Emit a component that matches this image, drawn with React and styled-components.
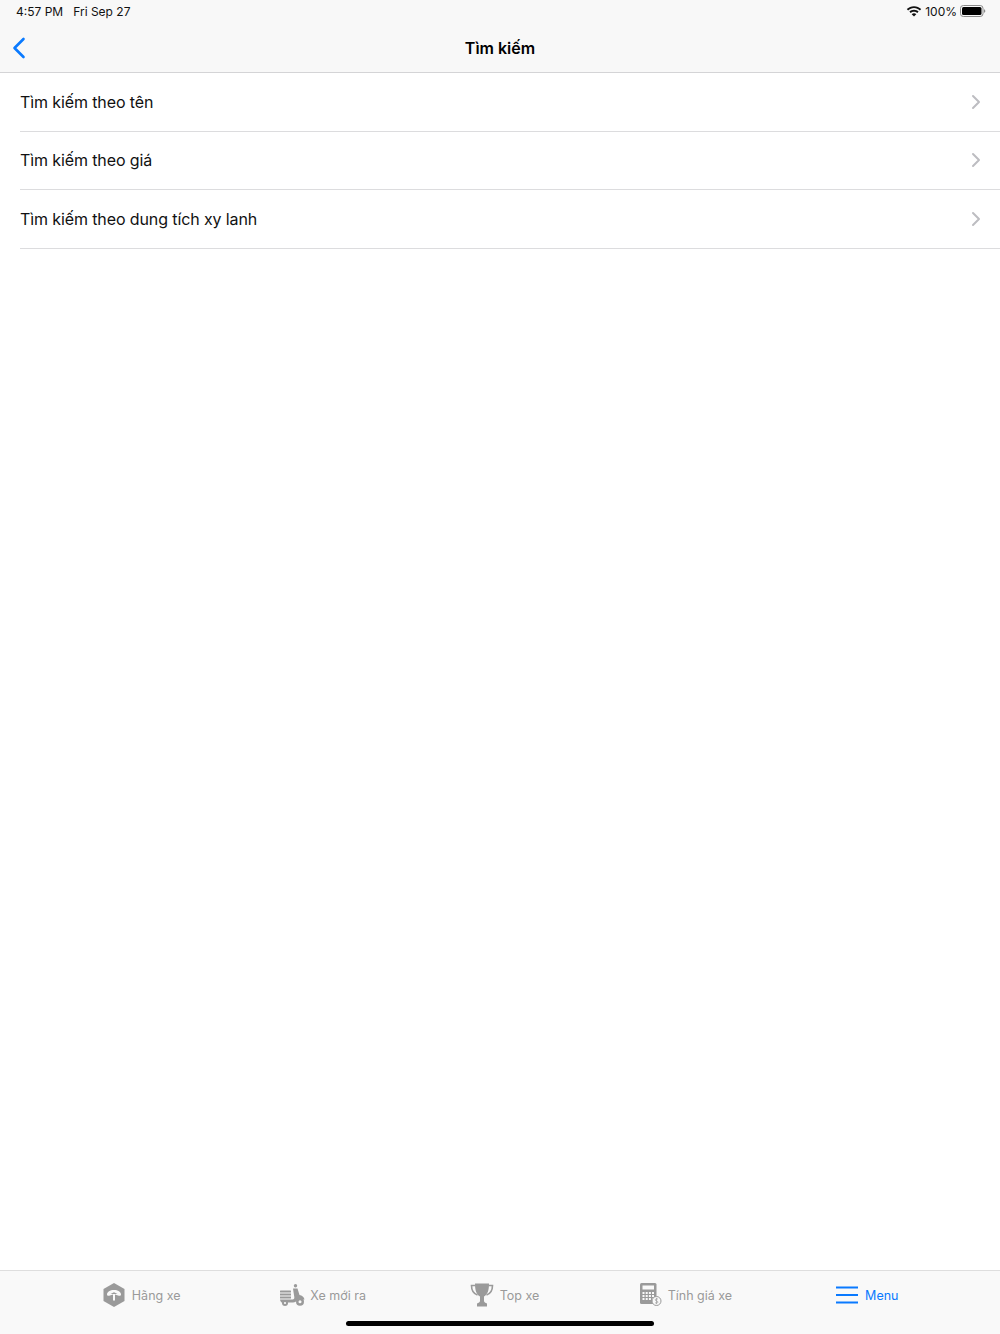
import React from 'react';
import styled, { createGlobalStyle } from 'styled-components';
import { ChevronRight } from 'lucide-react';

const GlobalStyle = createGlobalStyle`
  html, body {
    margin: 0;
    padding: 0;
    background: #fff;
    font-family: Inter, "Liberation Sans", sans-serif;
  }
`;

const Page = styled.div`
  position: relative;
  width: 1000px;
  height: 1334px;
  display: flex;
  flex-direction: column;
  overflow: hidden;
`;

const Header = styled.header`
  height: 72px;
  background: #f8f8f8;
  border-bottom: 1px solid #d4d4d6;
  display: flex;
  flex-direction: column;
`;

const StatusBar = styled.div`
  height: 22px;
  padding: 0 14px 2px 16px;
  display: flex;
  align-items: center;
  justify-content: space-between;
  font-size: 12px;
  color: #111;
`;

const StatusLeft = styled.div`
  display: flex;
  gap: 10px;
`;

const StatusRight = styled.div`
  display: flex;
  align-items: center;
  gap: 3px;
`;

const NavBar = styled.div`
  flex: 1;
  display: flex;
  align-items: center;
  justify-content: center;
  position: relative;
`;

const BackButton = styled.div`
  position: absolute;
  left: 12px;
  top: 13px;
  display: flex;
`;

const Title = styled.h1`
  margin: 0;
  font-size: 16px;
  font-weight: 600;
  color: #000;
`;

const List = styled.div`
  flex: 1;
  padding-left: 20px;
`;

const Row = styled.div`
  height: 57.5px;
  padding-right: 12px;
  display: flex;
  align-items: center;
  justify-content: space-between;
  border-bottom: 1px solid #dcdcde;
  font-size: 16px;
  letter-spacing: -0.11px;
  color: #111;
  svg {
    color: #bdbdc1;
  }
`;

const TabBar = styled.nav`
  height: 63px;
  background: #f9f9f9;
  border-top: 1px solid #dedede;
  padding: 0 42px 0 51px;
  display: grid;
  grid-template-columns: repeat(5, 1fr);
`;

const Tab = styled.div`
  height: 48px;
  display: flex;
  align-items: center;
  justify-content: center;
  gap: ${(props) => props.$gap}px;
  font-size: 12.5px;
  color: ${(props) => (props.$active ? '#0a7aff' : '#9a9a9a')};
`;

const HomeIndicator = styled.div`
  position: absolute;
  left: 346px;
  bottom: 8px;
  width: 308px;
  height: 5px;
  border-radius: 3px;
  background: #000;
`;

const Wifi = () => (
  <svg width="16" height="12" viewBox="0 0 16 12">
    <path d="M8 1.200c2.800 0 5.300 1.100 7.200 2.900l-1.300 1.400C12.300 4 10.300 3.100 8 3.100S3.700 4 2.100 5.500L.8 4.100C2.700 2.300 5.200 1.200 8 1.200z" fill="#111" />
    <path d="M8 4.800c1.800 0 3.400.7 4.600 1.800l-1.300 1.400C10.400 7.200 9.300 6.700 8 6.700s-2.400.5-3.300 1.300L3.400 6.600C4.600 5.500 6.200 4.800 8 4.800z" fill="#111" />
    <path d="M8 8.300c.9 0 1.700.3 2.300.9L8 11.600 5.700 9.200c.6-.6 1.400-.9 2.300-.9z" fill="#111" />
  </svg>
);

const Battery = () => (
  <svg width="26" height="12" viewBox="0 0 26 12">
    <rect x="0.500" y="0.500" width="22.500" height="11" rx="2.800" fill="none" stroke="#8a8a8a" />
    <rect x="2" y="2" width="19.500" height="8" rx="1.500" fill="#000" />
    <path d="M24 4.200c.8.200 1.300.9 1.300 1.800s-.5 1.600-1.300 1.800z" fill="#8a8a8a" />
  </svg>
);

const BackIcon = () => (
  <svg width="14" height="22" viewBox="0 0 14 22">
    <path d="M11.500 2 2.500 11l9 9" fill="none" stroke="#0a7aff" strokeWidth="2.600" strokeLinecap="round" strokeLinejoin="round" />
  </svg>
);

const BrandIcon = () => (
  <svg width="22" height="24" viewBox="0 0 22 24">
    <path d="M11 0 21.500 6v12L11 24 .5 18V6z" fill="#9a9a9a" />
    <path d="M11 7c-4 0-7 1.900-7 4.400 0 1.100 1 1.700 2.200 1.300L10 11.400v6h2v-6l3.800 1.300c1.200.4 2.200-.2 2.200-1.300C18 8.900 15 7 11 7z" fill="#f9f9f9" />
    <path d="M11 9.300 7.500 11h7z" fill="#9a9a9a" />
  </svg>
);

const ScooterIcon = () => (
  <svg width="25" height="22" viewBox="0 0 25 22">
    <g fill="#9a9a9a">
      <rect x="0" y="6.500" width="11" height="2" rx="0.500" />
      <rect x="0" y="9.500" width="11" height="2" />
      <rect x="0" y="12.500" width="11" height="2" />
      <circle cx="15.500" cy="1.800" r="1.700" />
      <path d="M13 4.500h4.500l2 6.500c2.500.6 4.500 2 5 4.500h-7c-1 1.700-2.500 3-4.500 3H1.500c-1-1-1.500-2-1.500-3h12.500c1.500 0 2-1 1.800-2.500L13.500 8z" />
      <circle cx="5" cy="19" r="3" />
      <circle cx="20" cy="17.800" r="4" />
    </g>
    <circle cx="20" cy="17.800" r="1.500" fill="#f9f9f9" />
    <circle cx="5" cy="19" r="1.100" fill="#f9f9f9" />
  </svg>
);

const TrophyIcon = () => (
  <svg width="24" height="24" viewBox="0 0 24 24">
    <path d="M5.500 2.500H1.500c0 5 1.500 8 6 9.500M18.500 2.500h4c0 5-1.500 8-6 9.500" fill="none" stroke="#9a9a9a" strokeWidth="1.600" />
    <path d="M5 .5h14c0 7-1.500 11-5 13v4.500c0 1 1.500 2 3 2.500V23.500H7V20.500c1.500-.5 3-1.500 3-2.500v-4.500C6.500 11.500 5 7.500 5 .5z" fill="#9a9a9a" />
  </svg>
);

const CalculatorIcon = () => (
  <svg width="22" height="24" viewBox="0 0 22 24">
    <rect x="0" y="0" width="16.500" height="21" rx="1.500" fill="#9a9a9a" />
    <rect x="2.500" y="2.500" width="11.500" height="4" fill="#f9f9f9" />
    <g fill="#f9f9f9">
      {[2.5, 5.7, 8.9, 12].map((x) =>
        [9, 12, 15].map((y) => <rect key={`${x}-${y}`} x={x} y={y} width="2" height="2" />),
      )}
    </g>
    <circle cx="16.500" cy="18" r="4.500" fill="#f9f9f9" stroke="#9a9a9a" />
    <path d="M18 16.200c-.5-.5-2.600-.6-2.800.6-.2 1.300 3 .9 2.800 2.400-.2 1-2.400 1-3 .4M16.500 14.800v6.400" fill="none" stroke="#9a9a9a" strokeWidth=".7" />
  </svg>
);

const MenuIcon = () => (
  <svg width="22" height="18" viewBox="0 0 22 18">
    <g fill="#0a7aff">
      <rect x="0" y="0.500" width="22" height="2" />
      <rect x="0" y="8" width="22" height="2" />
      <rect x="0" y="15.500" width="22" height="2" />
    </g>
  </svg>
);

const rows = ['Tìm kiếm theo tên', 'Tìm kiếm theo giá', 'Tìm kiếm theo dung tích xy lanh'];

export default function App() {
  return (
    <Page>
      <GlobalStyle />
      <Header>
        <StatusBar>
          <StatusLeft>
            <span>4:57 PM</span>
            <span>Fri Sep 27</span>
          </StatusLeft>
          <StatusRight>
            <Wifi />
            <span>100%</span>
            <Battery />
          </StatusRight>
        </StatusBar>
        <NavBar>
          <BackButton>
            <BackIcon />
          </BackButton>
          <Title>Tìm kiếm</Title>
        </NavBar>
      </Header>
      <List>
        {rows.map((row) => (
          <Row key={row}>
            {row}
            <ChevronRight size={24} strokeWidth={2} />
          </Row>
        ))}
      </List>
      <TabBar>
        <Tab $gap={7}>
          <BrandIcon />
          Hãng xe
        </Tab>
        <Tab $gap={5}>
          <ScooterIcon />
          Xe mới ra
        </Tab>
        <Tab $gap={6}>
          <TrophyIcon />
          Top xe
        </Tab>
        <Tab $gap={6}>
          <CalculatorIcon />
          Tính giá xe
        </Tab>
        <Tab $gap={7} $active>
          <MenuIcon />
          Menu
        </Tab>
      </TabBar>
      <HomeIndicator />
    </Page>
  );
}
